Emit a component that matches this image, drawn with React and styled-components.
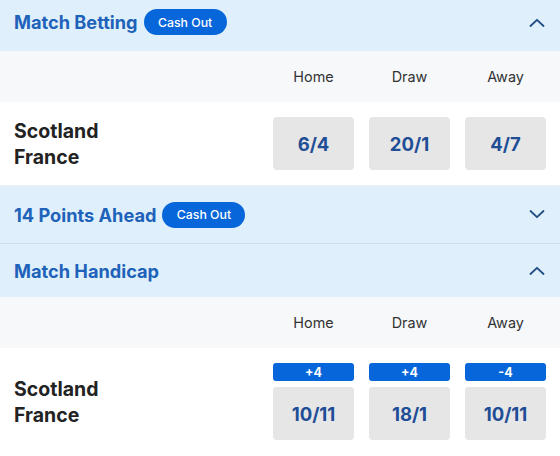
import React from "react";
import styled, { createGlobalStyle } from "styled-components";

const Global = createGlobalStyle`
  html, body { margin: 0; padding: 0; background: #ffffff; }
  body { font-family: Inter, "Noto Sans", "Liberation Sans", sans-serif; overflow: hidden; }
  * { box-sizing: border-box; }
`;

const Page = styled.div`
  width: 560px;
  margin-top: -7px;
  display: flex;
  flex-direction: column;
`;

const MarketHeader = styled.div`
  height: ${(p) => p.$h}px;
  display: flex;
  align-items: center;
  gap: 6px;
  padding: 0 15px 0 14px;
  background: #dff0fc;
  border-top: ${(p) => (p.$divider ? "1px solid #c9dff0" : "none")};
`;

const Title = styled.h2`
  margin: 0;
  font-size: 18.2px;
  font-weight: 700;
  color: #1e62b9;
`;

const CashOut = styled.span`
  display: inline-flex;
  align-items: center;
  justify-content: center;
  height: 26px;
  width: 83px;
  border-radius: 13px;
  background: #0766da;
  color: #ffffff;
  font-size: 12.3px;
  font-weight: 500;
`;

const Chevron = styled.svg`
  margin-left: auto;
  width: 16px;
  height: 9px;
  flex-shrink: 0;
`;

const ColumnRow = styled.div`
  height: 51px;
  display: grid;
  grid-template-columns: 1fr 81px 81px 81px;
  column-gap: 15px;
  align-items: center;
  padding: 0 14px;
  background: #f6f8fa;
`;

const ColumnLabel = styled.div`
  grid-column: ${(p) => p.$col};
  text-align: center;
  font-size: 14.4px;
  color: #333333;
`;

const MatchRow = styled.div`
  display: grid;
  grid-template-columns: 1fr 81px 81px 81px;
  column-gap: 15px;
  align-items: center;
  padding: 15px 14px 15px;
  background: #ffffff;
  border-bottom: ${(p) => (p.$last ? "none" : "1px solid #e9eef2")};
`;

const Teams = styled.div`
  display: flex;
  flex-direction: column;
  font-size: 19.5px;
  font-weight: 700;
  line-height: 26px;
  color: #222222;
`;

const Selection = styled.div`
  display: flex;
  flex-direction: column;
  gap: 6px;
`;

const Line = styled.div`
  height: 18px;
  border-radius: 3px;
  background: #0766da;
  color: #ffffff;
  font-size: 12.5px;
  font-weight: 700;
  display: flex;
  align-items: center;
  justify-content: center;
`;

const Odds = styled.button`
  height: 53px;
  width: 81px;
  border: none;
  border-radius: 4px;
  background: #e6e6e6;
  color: #1f4d96;
  font-family: inherit;
  font-size: 18.5px;
  font-weight: 700;
  padding: 0;
  cursor: pointer;
`;

const ChevronIcon = ({ up }) => (
  <Chevron viewBox="0 0 16 9" fill="none">
    <path
      d={up ? "M1.5 8 L8 1.8 L14.5 8" : "M1.5 1 L8 7.2 L14.5 1"}
      stroke="#1f4c82"
      strokeWidth="1.8"
      strokeLinecap="round"
      strokeLinejoin="round"
    />
  </Chevron>
);

const Header = ({ title, cashOut, open, h, divider }) => (
  <MarketHeader $h={h} $divider={divider}>
    <Title>{title}</Title>
    {cashOut && <CashOut>Cash Out</CashOut>}
    <ChevronIcon up={open} />
  </MarketHeader>
);

const Columns = () => (
  <ColumnRow>
    <ColumnLabel $col={2}>Home</ColumnLabel>
    <ColumnLabel $col={3}>Draw</ColumnLabel>
    <ColumnLabel $col={4}>Away</ColumnLabel>
  </ColumnRow>
);

const Match = ({ prices, lines, last }) => (
  <MatchRow $last={last}>
    <Teams>
      <span>Scotland</span>
      <span>France</span>
    </Teams>
    {prices.map((p, i) => (
      <Selection key={i}>
        {lines && <Line>{lines[i]}</Line>}
        <Odds>{p}</Odds>
      </Selection>
    ))}
  </MatchRow>
);

export default function App() {
  return (
    <>
      <Global />
      <Page>
        <Header title="Match Betting" cashOut open h={58} />
        <Columns />
        <Match prices={["6/4", "20/1", "4/7"]} />
        <Header title="14 Points Ahead" cashOut h={57} />
        <Header title="Match Handicap" open divider h={54} />
        <Columns />
        <Match prices={["10/11", "18/1", "10/11"]} lines={["+4", "+4", "-4"]} last />
      </Page>
    </>
  );
}
